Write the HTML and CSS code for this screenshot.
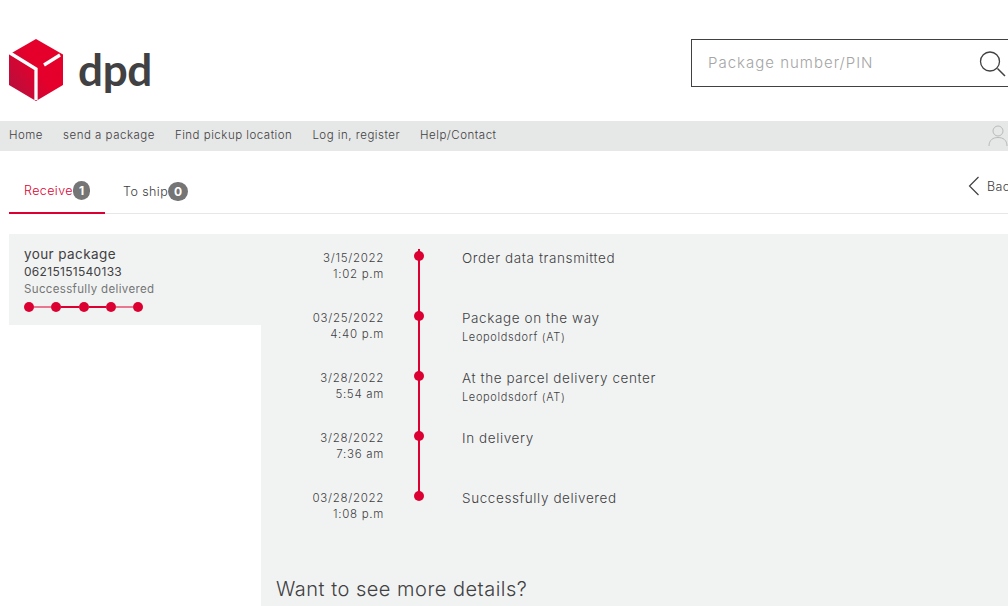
FILE: index.html
```html
<!DOCTYPE html>
<html>
<head>
    <title>Track your package</title>
    <link rel="stylesheet" href="styles.css">
</head>
<body>

<div class="page">
    <!-- Logo and search -->
    <header class="top">
        <div class="logo">
            <svg class="cube" width="54" height="62" viewBox="0 0 54 62">
                <defs>
                    <linearGradient id="cubeShade" x1="0" y1="0.85" x2="0.5" y2="0.45">
                        <stop offset="0" stop-color="#b5103f"/>
                        <stop offset="1" stop-color="#e4002b"/>
                    </linearGradient>
                </defs>
                <path d="M27 0 L54 15.5 V46 L27 62 L0 46 V15.5 Z" fill="url(#cubeShade)"/>
                <path d="M1 14 L27 30 V61" fill="none" stroke="#fff" stroke-width="3.3"/>
                <path d="M35 26 L51 16" fill="none" stroke="#fff" stroke-width="3.3"/>
            </svg>
            <span class="wordmark">dpd</span>
        </div>
        <div class="search">
            <span class="search-text">Package number/PIN</span>
            <svg width="28" height="28" viewBox="0 0 28 28" fill="none" stroke="#414042">
                <circle cx="11" cy="12.5" r="9.5" stroke-width="1.3"/>
                <path d="M18.5 19.5 L26 27" stroke-width="1.5"/>
            </svg>
        </div>
    </header>

    <!-- Main navigation -->
    <nav class="nav">
        <a>Home</a>
        <a>send a package</a>
        <a>Find pickup location</a>
        <a>Log in, register</a>
        <a>Help/Contact</a>
        <svg class="user" width="20" height="22" viewBox="0 0 20 22" fill="none" stroke="#b9bbbb" stroke-width="1">
            <circle cx="10" cy="6" r="5"/>
            <path d="M1 21 C1 15 5 12.5 10 12.5 C15 12.5 19 15 19 21"/>
        </svg>
    </nav>

    <!-- Tabs -->
    <div class="tabs">
        <div class="tab active">Receive<span class="badge">1</span></div>
        <div class="tab">To ship<span class="badge">0</span></div>
        <div class="back">
            <svg width="12" height="20" viewBox="0 0 12 20" fill="none" stroke="#414042" stroke-width="1.2">
                <path d="M10.5 1 L1.5 10 L10.5 19"/>
            </svg>
            Back
        </div>
    </div>

    <div class="content">
        <!-- Package list -->
        <aside class="sidebar">
            <div class="package">
                <div class="package-title">your package</div>
                <div class="package-number">06215151540133</div>
                <div class="package-status">Successfully delivered</div>
                <div class="progress">
                    <i></i><b></b><i></i><b class="dark"></b><i></i><b class="dark"></b><i></i><b></b><i></i>
                </div>
            </div>
        </aside>

        <!-- Tracking detail -->
        <main class="detail">
            <div class="timeline">
                <div class="event">
                    <div class="when">3/15/2022<br>1:02 p.m</div>
                    <div class="mark"></div>
                    <div class="what">Order data transmitted</div>
                </div>
                <div class="event">
                    <div class="when">03/25/2022<br>4:40 p.m</div>
                    <div class="mark"></div>
                    <div class="what">Package on the way<small>Leopoldsdorf (AT)</small></div>
                </div>
                <div class="event">
                    <div class="when">3/28/2022<br>5:54 am</div>
                    <div class="mark"></div>
                    <div class="what">At the parcel delivery center<small>Leopoldsdorf (AT)</small></div>
                </div>
                <div class="event">
                    <div class="when">3/28/2022<br>7:36 am</div>
                    <div class="mark"></div>
                    <div class="what">In delivery</div>
                </div>
                <div class="event last">
                    <div class="when">03/28/2022<br>1:08 p.m</div>
                    <div class="mark"></div>
                    <div class="what">Successfully delivered</div>
                </div>
            </div>
            <h2>Want to see more details?</h2>
        </main>
    </div>
</div>

</body>
</html>
```

FILE: styles.css
```css
/* Basic styling */
html, body {
    margin: 0;
    height: 606px;
    overflow: hidden;
    background: #fff;
}
body {
    font-family: Inter, "Liberation Sans", sans-serif;
    font-weight: 300;
    color: #414042;
}
.page {
    width: 1030px;
    height: 606px;
    overflow: hidden;
}

/* Header */
.top {
    display: flex;
    justify-content: space-between;
    height: 121px;
    box-sizing: border-box;
    padding-left: 9px;
}
.logo {
    display: flex;
    align-items: flex-start;
    padding-top: 39px;
}
.wordmark {
    margin-left: 15px;
    margin-top: 3px;
    font-family: Lato, sans-serif;
    font-weight: 700;
    font-size: 44px;
    line-height: 54px;
    letter-spacing: -0.3px;
    color: #414042;
}
.search {
    display: flex;
    align-items: center;
    justify-content: space-between;
    box-sizing: border-box;
    width: 339px;
    height: 48px;
    margin-top: 39px;
    padding: 0 22px 2px 16px;
    border: 1px solid #414042;
}
.search-text {
    font-size: 15px;
    letter-spacing: 1px;
    color: #a5a5a5;
}
.search svg {
    margin-top: 2px;
}

/* Nav */
.nav {
    display: flex;
    align-items: center;
    height: 30px;
    box-sizing: border-box;
    padding: 0 0 2px 9px;
    background: #e6e7e7;
    font-size: 11.5px;
    letter-spacing: 0.5px;
    position: relative;
}
.nav a {
    margin-right: 20px;
}
.user {
    position: absolute;
    left: 988px;
    top: 4px;
}

/* Tabs */
.tabs {
    display: flex;
    height: 63px;
    box-sizing: border-box;
    margin-left: 9px;
    border-bottom: 1px solid #e6e7e7;
    font-size: 12.5px;
    letter-spacing: 0.4px;
    position: relative;
}
.tab {
    display: flex;
    align-items: center;
    height: 63px;
    box-sizing: border-box;
    padding: 17px 15px 0;
    margin-right: 3px;
    white-space: nowrap;
}
.tab.active {
    color: #dc0032;
    border-bottom: 2px solid #dc0032;
}
.badge {
    flex: none;
    height: 19px;
    padding: 0 6px;
    border-radius: 10px;
    background: #757575;
    color: #fff;
    font-weight: 700;
    font-size: 12px;
    line-height: 19px;
    text-align: center;
    letter-spacing: 0;
}
.back {
    position: absolute;
    left: 959px;
    top: 25px;
    display: flex;
    align-items: center;
    gap: 7px;
    font-size: 12.5px;
}

/* Content */
.content {
    display: flex;
    margin-top: 20px;
    padding-left: 9px;
}
.sidebar {
    flex: none;
    width: 252px;
}
.package {
    height: 91px;
    box-sizing: border-box;
    padding: 11px 15px 0;
    background: #f1f3f3;
}
.package-title {
    font-size: 13.5px;
    line-height: 18px;
    font-weight: 400;
    letter-spacing: 0.4px;
}
.package-number {
    font-size: 12px;
    line-height: 18px;
    font-weight: 400;
    letter-spacing: 0.3px;
}
.package-status {
    font-size: 11.5px;
    line-height: 17px;
    font-weight: 400;
    letter-spacing: 0.35px;
    color: #757575;
}
.progress {
    display: flex;
    align-items: center;
    width: 119px;
    margin-top: 4px;
}
.progress i {
    flex: none;
    width: 10px;
    height: 10px;
    border-radius: 50%;
    background: #dc0032;
}
.progress b {
    flex: 1;
    height: 2px;
    background: #e8778f;
}
.progress b.dark {
    background: #dc0032;
}
.detail {
    flex: 1;
    height: 372px;
    background: #f1f3f3;
    box-sizing: border-box;
}
.timeline {
    padding-top: 15px;
}
.event {
    display: flex;
    height: 60px;
}
.when {
    width: 123px;
    text-align: right;
    font-size: 11.5px;
    line-height: 16px;
    padding-top: 1px;
    letter-spacing: 0.7px;
}
.mark {
    position: relative;
    flex: none;
    width: 2px;
    margin: 0 42px 0 34px;
    background: #dc0032;
}
.mark::before {
    content: "";
    position: absolute;
    left: -4px;
    top: 2px;
    width: 10px;
    height: 10px;
    border-radius: 50%;
    background: #dc0032;
}
.event.last .mark {
    height: 8px;
}
.what {
    font-size: 13.5px;
    line-height: 18px;
    letter-spacing: 0.6px;
}
.what small {
    display: block;
    font-size: 11px;
    line-height: 20px;
    letter-spacing: 0.65px;
}
h2 {
    margin: 27px 0 0 15px;
    font-size: 20px;
    font-weight: 300;
    line-height: 26px;
    letter-spacing: 0.5px;
}
```
